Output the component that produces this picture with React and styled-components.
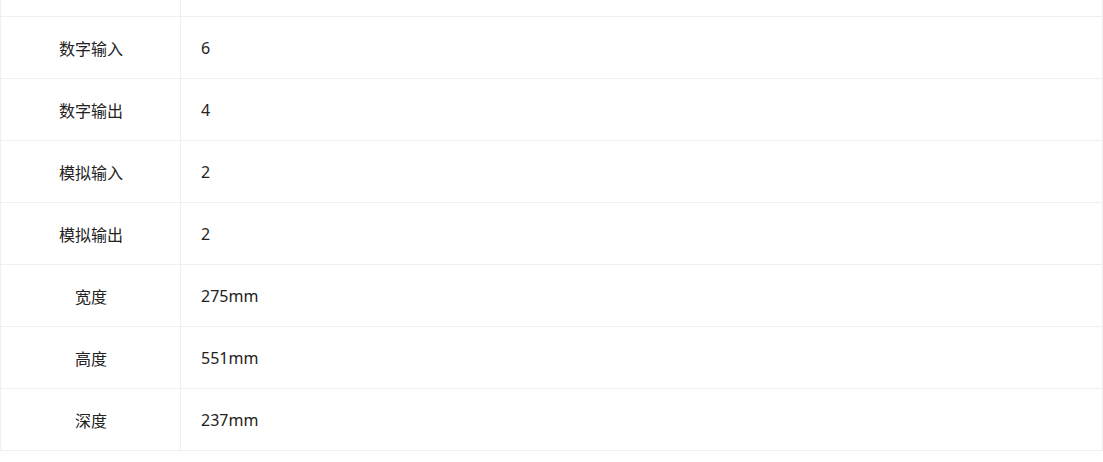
import React from 'react';
import styled, { createGlobalStyle } from 'styled-components';

const GlobalStyle = createGlobalStyle`
  html, body {
    margin: 0;
    padding: 0;
    background: #fff;
  }
  body {
    font-family: "Noto Sans", "Noto Sans CJK SC", sans-serif;
    color: #222;
  }
`;

const Table = styled.div`
  width: 1103px;
  box-sizing: border-box;
  border-left: 1px solid #efefef;
  border-right: 1px solid #efefef;
`;

const Row = styled.div`
  display: grid;
  grid-template-columns: 180px 1fr;
  height: ${(p) => p.$height}px;
  box-sizing: border-box;
  border-bottom: 1px solid #efefef;
`;

const Label = styled.div`
  display: flex;
  align-items: center;
  justify-content: center;
  border-right: 1px solid #efefef;
  font-size: 16px;
  padding-left: 1px;
`;

const Value = styled.div`
  display: flex;
  align-items: center;
  padding-left: 20px;
  font-size: 16px;
`;

const specs = [
  ['数字输入', '6'],
  ['数字输出', '4'],
  ['模拟输入', '2'],
  ['模拟输出', '2'],
  ['宽度', '275mm'],
  ['高度', '551mm'],
  ['深度', '237mm'],
];

export default function App() {
  return (
    <>
      <GlobalStyle />
      <Table>
        <Row $height={17}>
          <Label />
          <Value />
        </Row>
        {specs.map(([label, value]) => (
          <Row key={label} $height={62}>
            <Label>{label}</Label>
            <Value>{value}</Value>
          </Row>
        ))}
      </Table>
    </>
  );
}
